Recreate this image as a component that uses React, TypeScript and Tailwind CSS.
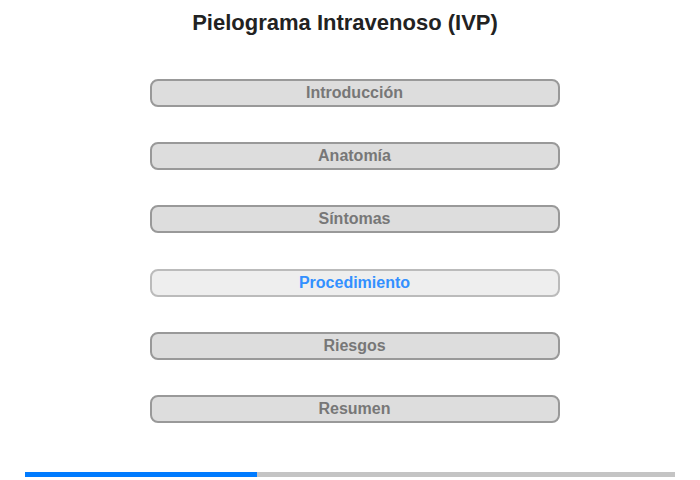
import React from 'react';

const sections = ['Introducción', 'Anatomía', 'Síntomas', 'Procedimiento', 'Riesgos', 'Resumen'];

const App: React.FC = () => {
  const active = 'Procedimiento';

  return (
    <div className="w-[700px] h-[480px] bg-white flex flex-col" style={{ fontFamily: '"Liberation Sans", Arial, sans-serif' }}>
      {/* Title */}
      <h1 className="pt-[9px] pr-[10px] text-center text-[22px] leading-[28px] font-bold text-[#222]">
        Pielograma Intravenoso (IVP)
      </h1>

      {/* Section buttons */}
      <div className="mt-[42px] pl-[9px] flex flex-col items-center gap-[35.2px]">
        {sections.map((s) => {
          const isActive = s === active;
          return (
            <button
              key={s}
              className={`w-[410px] h-[28px] rounded-[8px] border-2 text-[16px] leading-[24px] font-bold ${
                isActive ? 'bg-[#eeeeee] border-[#bbbbbb] text-[#3390ff]' : 'bg-[#dddddd] border-[#999999] text-[#777777]'
              }`}
            >
              {s}
            </button>
          );
        })}
      </div>

      {/* Progress bar */}
      <div className="mt-auto mb-[3px] mx-[25px] h-[5px] bg-[#c4c4c4] flex">
        <div className="w-[232px] h-full bg-[#007bff]" />
      </div>
    </div>
  );
};

export default App;
